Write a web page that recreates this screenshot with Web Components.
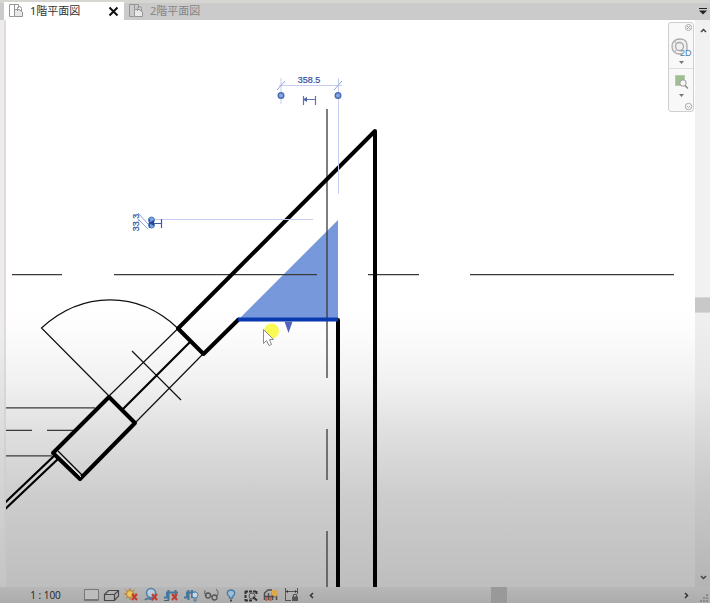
<!DOCTYPE html>
<html lang="ja">
<head>
<meta charset="utf-8">
<title>1階平面図</title>
<style>
html, body { margin: 0; height: 100%; overflow: hidden; }
body { font-family: "Noto Sans", "Noto Sans CJK JP", sans-serif; background: #fff; }
</style>
</head>
<body>
<view-window>
  <view-tabs slot="tabs">
    <view-tab active>1階平面図</view-tab>
    <view-tab>2階平面図</view-tab>
  </view-tabs>
  <plan-canvas slot="canvas"><nav-bar></nav-bar></plan-canvas>
  <scroll-column slot="side"></scroll-column>
  <view-controls slot="controls"></view-controls>
</view-window>

<script>
const define = (name, html, setup) => {
  const template = document.createElement('template');
  template.innerHTML = html;
  customElements.define(name, class extends HTMLElement {
    constructor() {
      super();
      this.attachShadow({ mode: 'open' }).append(template.content.cloneNode(true));
      if (setup) setup(this);
    }
  });
};
const buttonReset = `button { appearance: none; border: 0; padding: 0; margin: 0; background: none; color: inherit; font: inherit; display: flex; align-items: center; justify-content: center; } svg { display: block; }`;

define('view-window', `
<style>
:host { display: grid; height: 100vh; grid-template-columns: 6px minmax(0, 1fr) 15px; grid-template-rows: 20px minmax(0, 1fr) 16px; }
.tabs { grid-column: 1 / -1; min-width: 0; }
.gutter { background: linear-gradient(#eeecec 0 310px, #c4c4c4 100%); border-right: 2px solid #c8c4c466; box-sizing: border-box; }
.controls { grid-column: 1 / -1; min-width: 0; }
.cell { display: grid; min-width: 0; min-height: 0; }
</style>
<div class="tabs cell"><slot name="tabs"></slot></div>
<div class="gutter"></div>
<div class="cell"><slot name="canvas"></slot></div>
<div class="cell"><slot name="side"></slot></div>
<div class="controls cell"><slot name="controls"></slot></div>`);

define('view-tabs', `
<style>${buttonReset}
:host { display: flex; background: linear-gradient(#d6d5d1 0 3px, #cbcbcb 3px 100%); padding: 2px 0 0 4px; box-sizing: border-box; }
button { margin-left: auto; width: 14px; color: #222; }
</style>
<slot></slot>
<button aria-label="タブの一覧"><svg width="10" height="10"><path d="M1 2.500H9" stroke="currentColor"/><path d="M1 4.500H9L5 8.500Z" fill="currentColor"/></svg></button>`);

define('view-tab', `
<style>${buttonReset}
:host { display: flex; align-items: center; width: 120px; box-sizing: border-box; padding: 0 5px 0 4px; color: #858585; font-size: 11px; line-height: 16px; }
:host([active]) { background: #fff; color: #333; }
.name { gap: 6px; }
.icon { color: #969696; }
.close { margin-left: auto; color: #111; display: none; }
:host([active]) .close { display: flex; }
</style>
<button class="name"><svg class="icon" width="16" height="16" fill="none" stroke="currentColor"><path d="M6 13.500H1.500V1.500H10.500V5M6.500 1.500V6"/><path d="M6.500 13.500V6.500H11L14.500 9V13.500Z" fill="#e8e8e8"/><path d="M9.500 8V5.500Q9.500 3.500 11.500 3.500T13.500 5.500V8"/></svg><slot></slot></button>
<button class="close" aria-label="閉じる"><svg width="11" height="11" stroke="currentColor" stroke-width="2"><path d="M1.500 1.500L9.500 9.500M9.500 1.500L1.500 9.500"/></svg></button>`);

define('plan-canvas', `
<style>
:host { display: block; position: relative; overflow: hidden; background: linear-gradient(#fff 0 51%, #fbfbfb 56%, #f1f1f1 64%, #dfdfdf 73%, #cdcdcd 84%, #bebebe 100%); }
svg { display: block; width: 100%; height: 100%; }
text { font: 9px "Liberation Sans", Arial, sans-serif; fill: #2f4fa0; stroke: #2f4fa0; stroke-width: 0.2px; }
.nav { position: absolute; top: 2px; right: 1px; }
</style>
<svg role="img" aria-label="平面図">
<g transform="translate(-6 -20)" fill="none">
  <path d="M338 220V320H238Z" fill="#7898dc"/>
  <g stroke="#3a3a3a" stroke-width="1.300">
    <path d="M12 274.700H62M114 274.700H317M368 274.700H419M470 274.700H674"/>
    <path d="M327 109V378M327 429V480M327 531V587"/>
    <path d="M6 407.800H95M6 430.300H32M47 430.300H75M6 455.800H52"/>
  </g>
  <g stroke="#111" stroke-width="1.200">
    <path d="M109 396L41.500 328C82 291 138 290 178 328.500"/>
    <path d="M109 396L178 328.500M135 423L203 354M132 351L181 400"/>
  </g>
  <path d="M123 409L190 342" stroke="#000" stroke-width="2.200"/>
  <path d="M55 455L0 507.500M59 458L0 514" stroke="#000" stroke-width="2.200"/>
  <g stroke="#000" stroke-width="4" stroke-linejoin="round" stroke-linecap="round">
    <path d="M375 600V131L178 328.500L203.500 354L238.500 319.500"/>
    <path d="M338 320V600"/>
    <path d="M53 453L109 397L135 423L80 479Z"/>
  </g>
  <path d="M57 453L81 477" stroke="#ddd" stroke-width="1"/>
  <path d="M58 451L83 476" stroke="#000" stroke-width="1.200"/>
  <path d="M238 319.500H338" stroke="#0839ae" stroke-width="4"/>
  <path d="M284.500 321.500H292.500L288.500 333Z" fill="#5363bd"/>
  <circle cx="271.500" cy="331" r="7.500" fill="#fafa54"/>
  <path d="M263.500 329.500V343.500L266.500 340.500L269 345.500L271.500 344.500L269.500 339.500H273.500Z" fill="#fff" stroke="#8b8b8b"/>
  <g stroke="#c6cdf0">
    <path d="M281 78V104M338.500 78V194M279 85.500H342M148 219.500H313"/>
    <path d="M277 90L285 81M334 90L342 81M138 213L148 224M139 220L148 229" stroke="#8fa1dc"/>
  </g>
  <path d="M281 95.500h0M338 95.500h0" stroke="#496fb5" stroke-width="7" stroke-linecap="round"/>
  <path d="M281 95.500h0M338 95.500h0" stroke="#86a9e2" stroke-width="4" stroke-linecap="round"/>
  <path d="M303.500 96V105M315.500 96V105M304 99.500H315" stroke="#6470b8" stroke-width="1.200"/>
  <path d="M303 99.500L307 97V102Z" fill="#4860b0"/>
  <circle cx="151.500" cy="220" r="3" fill="#7ea4dc" stroke="#4c78b8"/>
  <circle cx="151.500" cy="225" r="3" fill="#7ea4dc" stroke="#4c78b8"/>
  <path d="M149.500 219V228M161.500 219V228M149 223.500H161" stroke="#4058a8" stroke-width="1.200"/>
  <path d="M149 223L154 220V226Z" fill="#24499a"/>
  <text x="309" y="83" text-anchor="middle">358.5</text>
  <text transform="translate(139 222.500) rotate(-90)" text-anchor="middle">33.3</text>
</g>
</svg>
<div class="nav"><slot></slot></div>`);

define('nav-bar', `
<style>${buttonReset}
:host { display: flex; flex-direction: column; align-items: stretch; width: 26px; height: 90px; box-sizing: border-box; border: 1px solid #cfcfcf; border-radius: 3px; background: #f8f8f8; color: #777; }
.round { align-self: flex-end; height: 9px; width: 9px; }
.tool { height: 36px; flex-direction: column; gap: 4px; }
.zoom { border-top: 1px solid #ddd; height: 34px; }
</style>
<button class="round" aria-label="閉じる"><svg width="9" height="9" fill="none" stroke="#aaa"><circle cx="4.500" cy="4.500" r="3"/><path d="M3 3L6 6M6 3L3 6"/></svg></button>
<button class="tool" aria-label="ステアリングホイール 2D"><svg width="22" height="20" fill="none" stroke="#aaa" stroke-width="1.300"><path d="M17 13V8C17 4 14 2 10 2C5 2 2 5 2 9.500C2 14 5 17 10 17H12" fill="#f0f0f0"/><circle cx="9.500" cy="9.500" r="4"/><path d="M4 4L6.500 6.500M4.500 15L7 12.500" stroke="#bbb"/><text x="10" y="19" fill="#4d7fad" stroke="none" font-family="Liberation Sans" font-size="9">2D</text></svg><svg width="5" height="3"><path d="M0 0H5L2.500 3Z" fill="currentColor"/></svg></button>
<button class="tool zoom" aria-label="領域を拡大"><svg width="18" height="16" fill="none"><path d="M3.500 1.500H12.500V11.500H3.500Z" fill="#a0bf91" stroke="#b5cbaa"/><circle cx="11" cy="9" r="3.200" fill="#f7f7f7" stroke="#999"/><path d="M13 11.500L16 14.500" stroke="#888" stroke-width="1.500"/></svg><svg width="5" height="3"><path d="M0 0H5L2.500 3Z" fill="currentColor"/></svg></button>
<button class="round" aria-label="設定"><svg width="9" height="9" fill="none" stroke="#aaa"><circle cx="4.500" cy="4.500" r="3.200"/><path d="M3 4L4.500 5.500L6 4"/></svg></button>`);

define('scroll-column', `
<style>${buttonReset}
:host { display: flex; flex-direction: column; background: linear-gradient(#f1f1f1 0 50%, #e7e7e7 64%, #cdcdcd 80%, #b4b4b4 100%); color: #444; }
button { height: 20px; padding-left: 1px; }
.track { flex: 1; display: grid; grid-template-rows: 257fr 16px 254fr; }
.thumb { grid-row: 2; background: #c8c8c8; border-block: 1px solid #d8d8d8; box-sizing: border-box; }
</style>
<button aria-label="上へ"><svg width="7" height="5" fill="none" stroke="currentColor" stroke-width="1.500"><path d="M1 4L3.500 1.500L6 4"/></svg></button>
<div class="track"><div class="thumb"></div></div>
<button aria-label="下へ"><svg width="7" height="5" fill="none" stroke="currentColor" stroke-width="1.500"><path d="M1 1L3.500 3.500L6 1"/></svg></button>`);

const red = '<path d="M9 7L14 13M14 7L9 13" stroke="#c33c2c" stroke-width="2"/>';
const tools = [
  ['詳細レベル', '<path d="M1.500 2.500H15.500V13.500H1.500Z" fill="#bdbdbd" stroke="#777"/><path d="M2 12.500H15" stroke="#777"/>'],
  ['表示スタイル', '<path d="M1.500 7.500L5.500 3.500H15.500V9L11.500 13.500H1.500ZM1.500 7.500H11.500L15.500 3.500M11.500 7.500V13.500" stroke="#484848" stroke-width="1.200"/>'],
  ['太陽の軌跡', '<path d="M7 1V13M1 7H13M2.500 2.500L11 11M11.500 2.500L3 11.500" stroke="#b87b22"/><circle cx="7" cy="7" r="3.500" fill="#edc75b" stroke="#b87b22"/>' + red],
  ['影', '<circle cx="8" cy="6" r="4.500" fill="#b9cedd" stroke="#527fa7" stroke-width="1.500"/><path d="M2 13C4 10 7 12 10 13" stroke="#557998" stroke-width="2"/>' + red],
  ['ビューのトリミング', '<path d="M1 10.500H4V5.500H15M5.500 13V3M12.500 3V12" stroke="#44769e" stroke-width="2"/><path d="M1 13.500H6" stroke="#4c5f70"/>' + red],
  ['トリミング領域', '<path d="M1 10.500H4V5.500H13M5.500 13V3M9 3V11" stroke="#44769e" stroke-width="2"/><circle cx="12" cy="8" r="3" fill="#c8d6df" stroke="#4b81aa"/><path d="M11 11V14H13V11" stroke="#57799a"/>'],
  ['一時的に非表示', '<path d="M2 3.500C1 6 2 8 4 9M13 2.500C16 4 15 7 14 9" stroke="#555"/><circle cx="5" cy="8.500" r="2.500" stroke="#555" stroke-width="1.300"/><circle cx="11.500" cy="10.500" r="2.500" stroke="#555" stroke-width="1.300"/><path d="M7.500 8.500L9 9.500" stroke="#555"/>'],
  ['非表示要素', '<path d="M6.500 11V9.500C2.500 7 4.500 3 8 3S13.500 7 9.500 9.500V11Z" fill="#9dbfd8" stroke="#487ca6" stroke-width="1.300"/><path d="M7 13.500H9" stroke="#444" stroke-width="2"/>'],
  ['一時的なビュー', '<path d="M2 4.500H14M2 13.500H9M2.500 4V14M13.500 4V8" stroke="#333" stroke-width="2" stroke-dasharray="3 1"/><circle cx="9" cy="9" r="3" stroke="#555"/><path d="M10 10L14 13.500" stroke="#333" stroke-width="2"/>'],
  ['解析モデル', '<path d="M1.500 13V6L5 3H9M5.500 13V6M2 9.500H13M9.500 13V5M13.500 13V8" stroke="#4d4d4d" stroke-width="1.500"/><path d="M3.500 10V14M7.500 10V14" stroke="#b85c4c" stroke-width="2"/><path d="M9 3H15V8L12 10L9 8Z" fill="#dfa84b"/>'],
  ['拘束', '<path d="M2.500 1V14M14.500 1V7M3 4.500H14M3 13.500H8" stroke="#555"/><path d="M9 9.500H15V14H9Z" fill="#555"/><path d="M10.500 10V7.500H13.500V10" stroke="#555"/><path d="M3 4.500L5 3V6ZM14 4.500L12 3V6Z" fill="#333"/>']
];
define('view-controls', `
<style>${buttonReset}
:host { display: flex; position: relative; color: #333; background: linear-gradient(#b7b7b7, #acacac); }
.scale { width: 81px; padding-left: 10px; font: 10px/16px "Open Sans", sans-serif; color: #222; flex: none; box-sizing: border-box; }
.tool { width: 20px; flex: none; }
.tools { display: flex; }
.arrow { width: 20px; flex: none; }
.track { flex: 1; display: grid; grid-template-columns: 170fr 16px 170fr; }
.thumb { grid-column: 2; background: #999; }
.grip { width: 13px; flex: none; display: flex; align-items: end; justify-content: end; padding-right: 1px; }
</style>
<button class="scale">1 : 100</button>
<div class="tools">${tools.map(([n, d]) => `<button class="tool" aria-label="${n}"><svg width="17" height="16" fill="none">${d}</svg></button>`).join('')}</div>
<button class="arrow" aria-label="左へ"><svg width="5" height="7" fill="none" stroke="currentColor" stroke-width="1.500"><path d="M4 1L1.500 3.500L4 6"/></svg></button>
<div class="track"><div class="thumb"></div></div>
<button class="arrow" aria-label="右へ"><svg width="5" height="7" fill="none" stroke="currentColor" stroke-width="1.500"><path d="M1 1L3.500 3.500L1 6"/></svg></button>
<div class="grip"><svg width="9" height="9" fill="#888"><path d="M6 0h2v2h-2zM3 3h2v2h-2zM6 3h2v2h-2zM0 6h2v2h-2zM3 6h2v2h-2zM6 6h2v2h-2z"/></svg></div>`);
</script>
</body>
</html>
